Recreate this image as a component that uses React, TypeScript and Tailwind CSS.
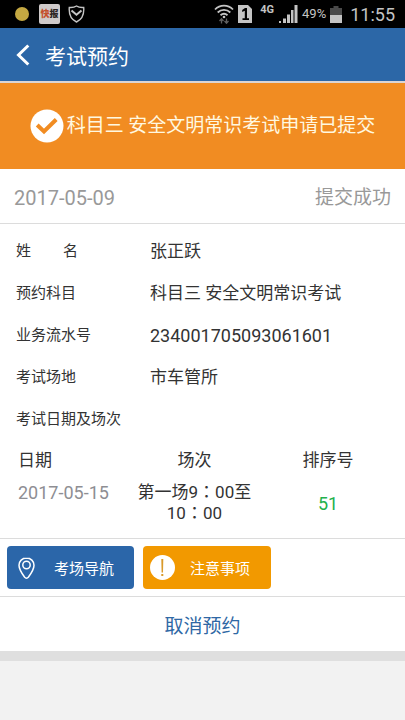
import type { ReactNode } from "react";

interface Field {
  label: ReactNode;
  value: string;
  numeric?: boolean;
}

const fields: Field[] = [
  {
    label: (
      <span className="flex w-[62px] justify-between">
        <span>姓</span>
        <span>名</span>
      </span>
    ),
    value: "张正跃",
  },
  { label: "预约科目", value: "科目三 安全文明常识考试" },
  { label: "业务流水号", value: "234001705093061601", numeric: true },
  { label: "考试场地", value: "市车管所" },
  { label: "考试日期及场次", value: "" },
];

// The TC face centres the full-width colon in its box
function Colon() {
  return (
    <span lang="zh-TW" className="font-['Noto_Sans_CJK_TC',sans-serif] leading-none">
      ：
    </span>
  );
}

function StatusBar() {
  return (
    <div className="flex h-7 items-center justify-between bg-black pr-[10px] pl-[15px] text-[#c4c4c4]">
      <div className="flex items-center gap-2">
        <span className="mr-0.5 h-[14px] w-[14px] rounded-full bg-[#c4a842]" />
        <span className="flex h-5 w-[21px] items-center justify-center rounded-xs bg-[#cfcaca] text-[9px] leading-none font-black">
          <span className="text-[#c4502c]">快</span>
          <span className="text-[#2b2322]">报</span>
        </span>
        <svg width="17" height="18" viewBox="0 0 17 18" fill="none" stroke="currentColor">
          <path d="M8.5 1C6.5 2.3 4 2.6 1.3 2.4C.7 9.5 2.6 14.3 8.5 17C14.4 14.3 16.3 9.5 15.7 2.4C13 2.6 10.5 2.3 8.5 1Z" strokeWidth="1.4" />
          <path d="M3.5 5.5L8.5 9.8L13.5 5.5" strokeWidth="2" />
        </svg>
      </div>
      <div className="flex items-center">
        <svg width="20" height="20" viewBox="0 0 20 20" fill="none" stroke="currentColor" strokeWidth="1.8">
          <path d="M1 5.5C6 .3 14 .3 19 5.5M3.7 8.5C7.3 5 12.7 5 16.3 8.5M6.5 11.3C8.7 9.4 11.3 9.4 13.5 11.3" />
          <circle cx="10" cy="13" r="1.3" fill="currentColor" stroke="none" />
          <path d="M7.5 19.5V15M5.5 17L7.5 14.8L9.5 17M12.5 14.5V19M10.5 17L12.5 19.2L14.5 17" stroke="#606060" strokeWidth="1.3" />
        </svg>
        <svg className="ml-1" width="14" height="18" viewBox="0 0 14 18">
          <path d="M0 0H10L14 4V18H0Z" fill="currentColor" />
          <path d="M4.2 5L7 3H9V13.2H11V15H4.5V13.2H6.8V5.8L4.2 7Z" fill="#000" />
        </svg>
        <span className="ml-2 self-start pt-px text-[11px] leading-4 font-bold">4G</span>
        <svg className="ml-1" width="20" height="18" viewBox="0 0 20 18" fill="currentColor">
          <path d="M1 16H3V18H1ZM5 13.5H8V18H5ZM9 9.5H12V18H9ZM13 5H15.5V18H13ZM16.5 0H19.5V18H16.5Z" />
        </svg>
        <span className="ml-1 text-[13px]">49%</span>
        <svg className="ml-1" width="12" height="17" viewBox="0 0 12 17">
          <path d="M3.5 0H8.5V2H12V9H0V2H3.5Z" fill="#4a4a4a" />
          <path d="M0 9H12V17H0Z" fill="currentColor" />
        </svg>
        <span className="ml-2 text-[18px]">11:55</span>
      </div>
    </div>
  );
}

function Header() {
  return (
    <header className="flex h-[55px] items-center border-b-2 border-[#dcd5d3] bg-[#2c67a7] text-white">
      <button aria-label="返回" className="flex h-full w-[45px] items-center pl-4">
        <svg width="14" height="22" viewBox="0 0 14 22" fill="none" stroke="currentColor" strokeWidth="3">
          <path d="M12.3 1.5L2.5 11L12.3 20.5" />
        </svg>
      </button>
      <h1 className="pt-1 text-[21px] leading-8">考试预约</h1>
    </header>
  );
}

function Banner() {
  return (
    <div className="flex h-[86px] items-center justify-center gap-[3px] bg-[#f18c22] text-[#fff8e0]">
      <svg className="shrink-0" width="34" height="34" viewBox="0 0 34 34">
        <circle cx="17" cy="17" r="16.5" fill="#fff" />
        <path d="M7.2 16L14 22.5L26.2 10.5" fill="none" stroke="#f18c22" strokeWidth="4" />
      </svg>
      <p className="text-[19px] leading-7">科目三 安全文明常识考试申请已提交</p>
    </div>
  );
}

function Sessions() {
  return (
    <table className="w-full table-fixed text-[17px] leading-[21px] text-[#333]">
      <thead>
        <tr className="h-10">
          <th className="w-[31%] pl-[18px] text-left font-normal">日期</th>
          <th className="w-[34%] font-normal">场次</th>
          <th className="pr-3 font-normal">排序号</th>
        </tr>
      </thead>
      <tbody>
        <tr>
          <td className="pt-0.5 pb-[14px] pl-[18px] align-top text-[18px] text-[#8e8e93]">2017-05-15</td>
          <td className="pt-0.5 pb-[14px] text-center">
            第一场9
            <Colon />
            00至
            <br />
            10
            <Colon />
            00
          </td>
          <td className="pt-0.5 pr-3 pb-[14px] text-center text-[18px] text-[#22b14c]">51</td>
        </tr>
      </tbody>
    </table>
  );
}

export default function App() {
  return (
    <div className="min-h-screen bg-[#f2f2f2] font-[Roboto,'Noto_Sans_CJK_SC',sans-serif]">
      <StatusBar />
      <Header />
      <main className="border-b-10 border-[#dfdfdf] bg-white">
        <Banner />

        <div className="flex h-[55px] items-center justify-between border-b border-[#dcdcdc] px-[14px] pt-1 text-[#999]">
          <span className="text-[20px]">2017-05-09</span>
          <span className="text-[19px]">提交成功</span>
        </div>

        <section className="border-b border-[#dcdcdc] pt-[6px]">
          <dl>
            {fields.map((field) => (
              <div key={field.value} className="flex h-[42px] items-center px-4 text-[#333]">
                <dt className="w-[134px] shrink-0 text-[15px]">{field.label}</dt>
                <dd className={field.numeric ? "text-[18px]" : "pt-0.5 text-[17px]"}>{field.value}</dd>
              </div>
            ))}
          </dl>
          <Sessions />
        </section>

        <div className="flex gap-[9px] border-b border-[#dcdcdc] p-[7px] text-[15px] text-white">
          <button className="flex h-[43px] w-[127px] items-center rounded-[4px] bg-[#2b66a9] pl-[11px]">
            <svg width="17" height="22" viewBox="0 0 17 22" fill="none" stroke="currentColor" strokeWidth="1.5">
              <path d="M8.5 1C4.2 1 1 4.2 1 8.3C1 12.5 3.5 16 6.5 20C7.7 21.5 9.3 21.5 10.5 20C13.5 16 16 12.5 16 8.3C16 4.2 12.8 1 8.5 1Z" />
              <circle cx="8.5" cy="8" r="3.7" />
            </svg>
            <span className="ml-[19px] pt-1">考场导航</span>
          </button>
          <button className="flex h-[43px] w-[128px] items-center rounded-[4px] bg-[#f29900] pl-[7px]">
            <svg width="25" height="25" viewBox="0 0 25 25">
              <circle cx="12.5" cy="12.5" r="12.5" fill="#fff" />
              <path d="M11.3 4H13.3L13 17.5H11.6ZM11.3 19H13.3V21H11.3Z" fill="#d99a2b" />
            </svg>
            <span className="ml-[15px] pt-1">注意事项</span>
          </button>
        </div>

        <button className="flex h-[54px] w-full items-center justify-center pt-1.5 text-[19px] text-[#2f68a5]">
          取消预约
        </button>
      </main>
    </div>
  );
}
